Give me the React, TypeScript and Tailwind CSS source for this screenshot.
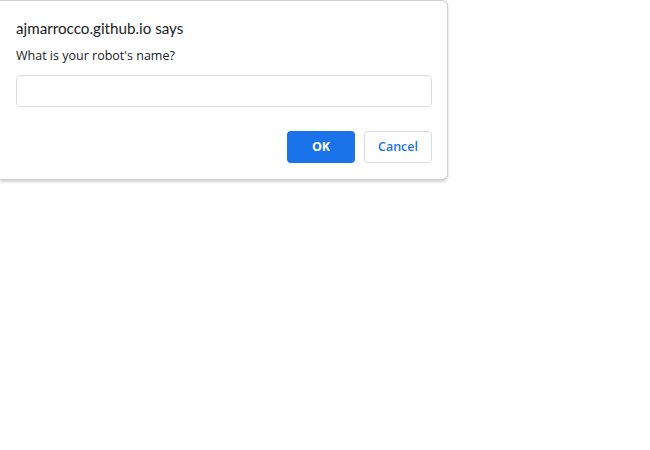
export default function App() {
  return (
    <div className="w-[650px] h-[450px] bg-white" style={{ fontFamily: '"Open Sans", "Noto Sans", sans-serif' }}>
      <div className="w-[448px] h-[180px] bg-white border-t border-r border-b border-[#d0d0d0] rounded-r-[6px] shadow-[0_2px_3px_rgba(0,0,0,0.18)] pl-4 pr-[15px] pt-[17px] flex flex-col">
        <h1 className="text-[15.2px] leading-[21px] text-[#202124]" style={{ fontFamily: 'Lato, "Open Sans", sans-serif' }}>
          ajmarrocco.github.io says
        </h1>
        <p className="mt-[8px] text-[12.5px] leading-[17px] text-[#202124]">What is your robot's name?</p>
        <input
          type="text"
          className="mt-[11px] h-[32px] w-full border border-[#dadce0] rounded-[4px] outline-none px-2 text-[13px]"
        />
        <div className="mt-[24px] flex justify-end gap-[9px]">
          <button className="w-[68px] h-[32px] rounded-[4px] bg-[#1a73e8] text-white text-[12.5px] font-bold">OK</button>
          <button className="w-[68px] h-[32px] rounded-[4px] border border-[#dadce0] bg-white text-[#1a73e8] text-[12.5px] font-semibold">Cancel</button>
        </div>
      </div>
    </div>
  );
}
